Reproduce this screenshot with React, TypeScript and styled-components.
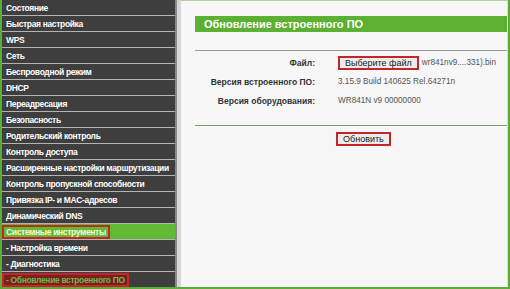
import React from "react";
import styled, { createGlobalStyle } from "styled-components";

const menu = [
  { label: "Состояние" },
  { label: "Быстрая настройка" },
  { label: "WPS" },
  { label: "Сеть" },
  { label: "Беспроводной режим" },
  { label: "DHCP" },
  { label: "Переадресация" },
  { label: "Безопасность" },
  { label: "Родительский контроль" },
  { label: "Контроль доступа" },
  { label: "Расширенные настройки маршрутизации" },
  { label: "Контроль пропускной способности" },
  { label: "Привязка IP- и MAC-адресов" },
  { label: "Динамический DNS" },
  { label: "Системные инструменты", open: true, marked: true },
  { label: "- Настройка времени", sub: true },
  { label: "- Диагностика", sub: true },
  { label: "- Обновление встроенного ПО", sub: true, current: true, marked: true },
];

const info = [
  { name: "Версия встроенного ПО:", value: "3.15.9 Build 140625 Rel.64271n" },
  { name: "Версия оборудования:", value: "WR841N v9 00000000" },
];

export default function App() {
  return (
    <>
      <Global />
      <Frame>
        <Sidebar>
          {menu.map((m) => (
            <MenuRow key={m.label} open={m.open}>
              <MenuText marked={m.marked} current={m.current} open={m.open}>
                {m.label}
              </MenuText>
            </MenuRow>
          ))}
        </Sidebar>
        <Divider />
        <Main>
          <Title>Обновление встроенного ПО</Title>
          <Rule />
          <Rows>
            <Label>Файл:</Label>
            <Value>
              <Marked>
                <FileButton type="button">Выберите файл</FileButton>
              </Marked>
              <FileName>wr841nv9....331).bin</FileName>
            </Value>
            {info.map((r) => (
              <React.Fragment key={r.name}>
                <Label>{r.name}</Label>
                <Value>{r.value}</Value>
              </React.Fragment>
            ))}
          </Rows>
          <Rule green />
          <Actions>
            <Marked>
              <FileButton type="button">Обновить</FileButton>
            </Marked>
          </Actions>
        </Main>
      </Frame>
    </>
  );
}

const Global = createGlobalStyle`
  html, body {
    margin: 0;
    padding: 0;
    background: #f7f7f7;
  }
  body {
    font-family: "Liberation Sans", Arial, sans-serif;
    overflow: hidden;
  }
`;

const Frame = styled.div`
  display: flex;
  width: 510px;
  height: 289px;
  box-sizing: border-box;
  border-left: 2px solid #5aad35;
  border-right: 2px solid #5aad35;
  border-bottom: 2px solid #5aad35;
  overflow: hidden;
`;

const Sidebar = styled.div`
  width: 173px;
  flex-shrink: 0;
  background: #3e3e3e;
  display: flex;
  flex-direction: column;
  overflow: hidden;
`;

const MenuRow = styled.div<{ open?: boolean }>`
  height: 15px;
  flex-shrink: 0;
  border-bottom: 1px solid #b4b4b4;
  background: ${({ open }) => (open ? "#62b934" : "#3e3e3e")};
  display: flex;
  align-items: center;
`;

const MenuText = styled.span<{ marked?: boolean; current?: boolean; open?: boolean }>`
  font-size: 8.5px;
  letter-spacing: -0.35px;
  font-weight: bold;
  white-space: nowrap;
  line-height: 10px;
  padding: 0 2px 0 2px;
  color: ${({ current, open }) => (current ? "#6db84a" : open ? "#fbf8d8" : "#ffffff")};
  border: 2px solid ${({ marked }) => (marked ? "#c3252b" : "transparent")};
  background: ${({ current }) => (current ? "#7c1f1f" : "transparent")};
`;

const Divider = styled.div`
  width: 4px;
  flex-shrink: 0;
  border-left: 2px solid #8a8a8a;
  background: #d6d6d6;
`;

const Main = styled.div`
  flex: 1;
  background: #f7f7f7;
  border-top: 1px solid #a9d78f;
  border-right: 1px solid #dcdcdc;
  padding: 15px 0 0 14px;
  display: flex;
  flex-direction: column;
`;

const Title = styled.div`
  height: 16px;
  background: #5cb032;
  color: #ffffff;
  font-size: 11px;
  font-weight: bold;
  line-height: 16px;
  padding-left: 9px;
`;

const Rule = styled.div<{ green?: boolean }>`
  height: 1px;
  margin-top: ${({ green }) => (green ? "15px" : "18px")};
  background: ${({ green }) => (green ? "#7e9d72" : "#9c9c9c")};
`;

const Rows = styled.div`
  display: grid;
  grid-template-columns: 120px 1fr;
  grid-auto-rows: 19px;
  column-gap: 23px;
  padding-top: 2px;
  align-items: center;
`;

const Label = styled.div`
  text-align: right;
  font-size: 8.5px;
  font-weight: bold;
  color: #333333;
`;

const Value = styled.div`
  display: flex;
  align-items: center;
  font-size: 8.2px;
  color: #555555;
`;

const Marked = styled.span`
  display: inline-flex;
  border: 2px solid #c3252b;
`;

const FileButton = styled.button`
  font-family: "Liberation Sans", Arial, sans-serif;
  font-size: 9px;
  color: #222222;
  background: #ececec;
  border: none;
  height: 10px;
  line-height: 10px;
  padding: 0 5px;
  margin: 0;
`;

const FileName = styled.span`
  margin-left: 3px;
`;

const Actions = styled.div`
  display: flex;
  padding: 6px 0 0 141px;
`;
